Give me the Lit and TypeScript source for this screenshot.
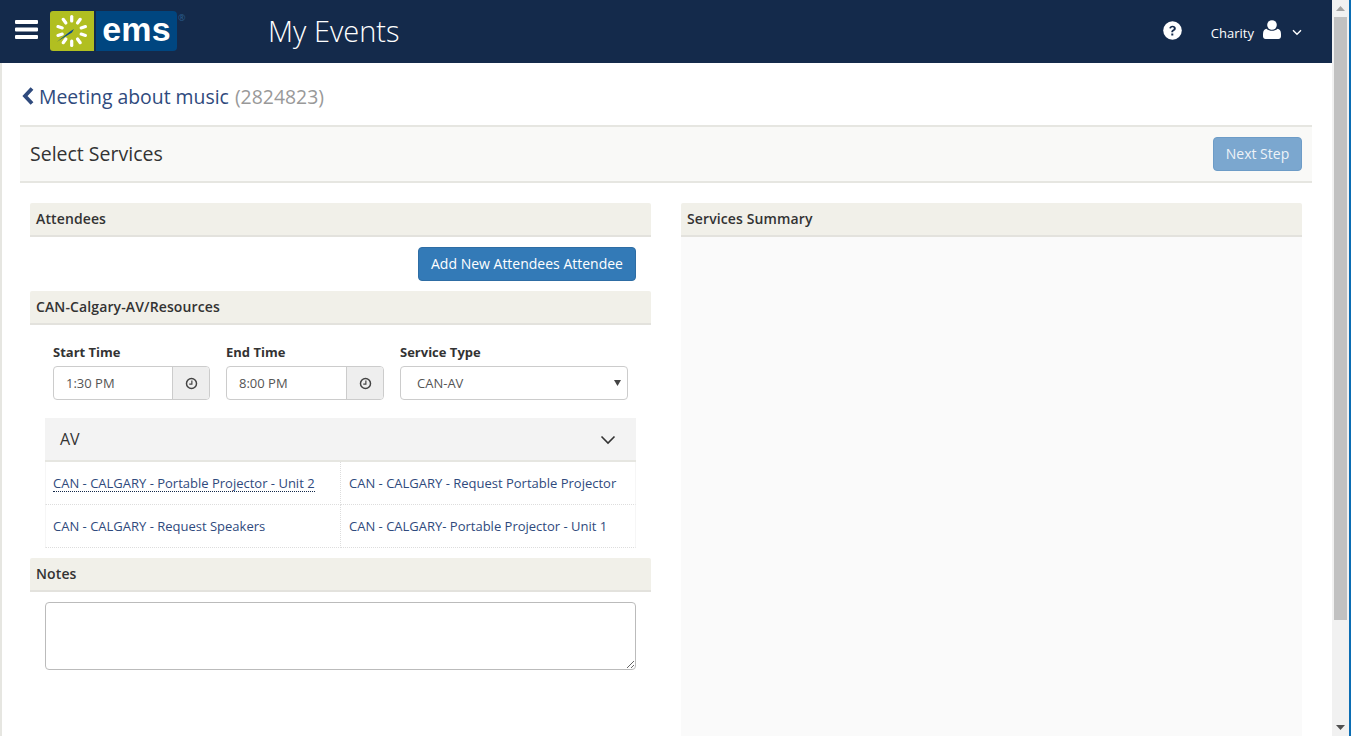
import { LitElement, css, html, svg } from "lit";
import { customElement } from "lit/decorators.js";

const RAYS = [0, 36, 72, 108, 144, 180, 216, 252, 288, 324];

const clock = html`<svg class="clock" viewBox="0 0 14 14" width="13" height="13">
  <circle cx="7" cy="7" r="5.4" fill="none" stroke="#444" stroke-width="1.6"></circle>
  <path d="M7.400 3.800V7.600H4.600" fill="none" stroke="#444" stroke-width="1.3"></path>
</svg>`;

@customElement("app-root")
export class AppRoot extends LitElement {
  static override styles = css`
    :host {
      display: flex;
      height: 736px;
      overflow: hidden;
      font-family: "Open Sans", sans-serif;
      font-size: 13px;
      color: #333;
      background: #fff;
    }

    * {
      box-sizing: border-box;
    }

    .page {
      width: 1332px;
      flex: none;
      display: flex;
      flex-direction: column;
      min-height: 0;
    }

    .scrollbar {
      width: 17px;
      flex: none;
      display: flex;
      flex-direction: column;
      align-items: center;
      background: #f1f1f1;
    }

    .arrow {
      height: 17px;
      flex: none;
      display: flex;
      align-items: center;
      justify-content: center;
    }

    .thumb {
      width: 13px;
      height: 603px;
      flex: none;
      background: #c1c1c1;
    }

    .gap {
      flex: 1;
    }

    .edge {
      width: 2px;
      flex: none;
      background: #0b6db3;
    }

    header {
      height: 63px;
      flex: none;
      display: flex;
      align-items: center;
      background: #142a4b;
      color: #fff;
      padding-left: 15px;
    }

    .burger {
      display: block;
      margin-right: 12px;
      margin-top: -4px;
    }

    .logo {
      display: flex;
      height: 40px;
      margin-top: -1px;
      position: relative;
    }

    .logo-mark {
      width: 44px;
      background: #b1bf21;
      border-radius: 3px 0 0 3px;
      display: flex;
      align-items: center;
      justify-content: center;
    }

    .logo-word {
      width: 81px;
      margin-left: 2px;
      background: #004680;
      border-radius: 0 4px 4px 0;
      font-family: "Liberation Sans", sans-serif;
      font-weight: 700;
      font-size: 34px;
      line-height: 37px;
      text-align: center;
      letter-spacing: 0.2px;
    }

    .reg {
      position: absolute;
      left: 128px;
      top: 1px;
      font-size: 9px;
      line-height: 11px;
      color: #2a5f8e;
    }

    .app-title {
      font-size: 29px;
      font-weight: 300;
      line-height: 38px;
      margin-left: 91px;
      margin-top: -1px;
    }

    .user {
      margin-left: auto;
      display: flex;
      align-items: center;
      margin-top: -3px;
      padding-right: 30px;
    }

    .help {
      display: block;
      margin-right: 29px;
    }

    .user-name {
      font-size: 13px;
      margin-right: 9px;
      margin-top: 5px;
    }

    .user-icon {
      display: block;
      margin-right: 11px;
      margin-top: -1px;
    }

    .user-caret {
      display: block;
      margin-top: 4px;
    }

    .content {
      flex: 1;
      min-height: 0;
      border-left: 2px solid #e6e6e1;
      padding: 0 20px 0 18px;
      display: flex;
      flex-direction: column;
    }

    .crumb {
      height: 62px;
      flex: none;
      display: flex;
      align-items: center;
      padding: 4px 0 0 2px;
      font-size: 19.4px;
      color: #2f4a7d;
    }

    .crumb svg {
      display: block;
      margin-right: 4px;
    }

    .crumb span {
      color: #999;
      margin-left: 6px;
    }

    .step {
      height: 58px;
      flex: none;
      display: flex;
      align-items: center;
      justify-content: space-between;
      padding: 0 10px;
      background: #f9f9f7;
      border-top: 2px solid #e6e6e1;
      border-bottom: 2px solid #e6e6e1;
      font-size: 19.5px;
      color: #333;
    }

    .step-title {
      margin-top: -2px;
    }

    .next {
      height: 34px;
      width: 89px;
      display: flex;
      align-items: center;
      justify-content: center;
      padding-bottom: 2px;
      font-size: 14px;
      font-weight: 500;
      color: #eef3f8;
      background: #7ba7cf;
      border: 1px solid #6d9cc7;
      border-radius: 4px;
    }

    .columns {
      flex: 1;
      min-height: 0;
      display: grid;
      grid-template-columns: 621px 621px;
      gap: 30px;
      padding: 20px 10px 0;
    }

    .col {
      display: flex;
      flex-direction: column;
      min-height: 0;
    }

    .head {
      height: 34px;
      flex: none;
      display: flex;
      align-items: center;
      padding: 0 0 2px 6px;
      font-size: 14px;
      font-weight: 600;
      letter-spacing: 0.12px;
      color: #333;
      background: #f1f0e9;
      border-bottom: 2px solid #e3e2dd;
      border-radius: 2px 2px 0 0;
    }

    .add-row {
      display: flex;
      justify-content: flex-end;
      padding: 10px 15px;
    }

    .add {
      height: 34px;
      width: 218px;
      display: flex;
      align-items: center;
      justify-content: center;
      padding-bottom: 2px;
      font-size: 14px;
      font-weight: 500;
      color: #fff;
      background: #337ab7;
      border: 1px solid #2e6da4;
      border-radius: 4px;
    }

    .fields {
      display: flex;
      gap: 16px;
      padding: 18px 23px 18px;
    }

    .field-label {
      font-size: 13px;
      font-weight: 700;
      line-height: 18px;
      margin-bottom: 5px;
      color: #333;
    }

    .time {
      display: flex;
      height: 34px;
      border: 1px solid #ccc;
      border-radius: 4px;
      overflow: hidden;
      background: #fff;
    }

    .time-value {
      flex: 1;
      padding-left: 12px;
      line-height: 32px;
      font-size: 13px;
      color: #555;
    }

    .time-addon {
      width: 37px;
      flex: none;
      display: flex;
      align-items: center;
      justify-content: center;
      background: #eee;
      border-left: 1px solid #ccc;
    }

    .start {
      width: 157px;
    }

    .end {
      width: 158px;
    }

    .type {
      width: 228px;
    }

    .select-wrap {
      position: relative;
    }

    .select-wrap svg {
      position: absolute;
      right: 7px;
      top: 14px;
      pointer-events: none;
    }

    select {
      display: block;
      width: 100%;
      height: 34px;
      padding: 0 16px;
      font: inherit;
      color: #555;
      background: #fff;
      border: 1px solid #ccc;
      border-radius: 4px;
      appearance: none;
    }

    .group {
      margin: 0 15px;
      flex: none;
    }

    .group-head {
      height: 44px;
      display: flex;
      align-items: center;
      justify-content: space-between;
      padding: 0 20px 0 15px;
      font-size: 16px;
      color: #333;
      background: #f3f3f3;
      border-bottom: 2px solid #e6e6e1;
    }

    .group-head svg {
      display: block;
      margin-top: 2px;
    }

    .items {
      display: grid;
      grid-template-columns: 296px 295px;
      grid-auto-rows: 43px;
    }

    .item {
      display: flex;
      align-items: center;
      padding-left: 8px;
      font-size: 13px;
      color: #2f4a7d;
      border-bottom: 1px dotted #ddd;
    }

    .item:nth-child(odd) {
      padding-left: 7px;
      border-left: 1px solid #f6f6f6;
      border-right: 1px dotted #ddd;
    }

    .item:nth-child(even) {
      border-right: 1px solid #f6f6f6;
    }

    .item.active span {
      border-bottom: 1px dotted #142a4b;
      line-height: 16px;
      margin-top: 1px;
    }

    .notes-head {
      margin-top: 10px;
    }

    .notes {
      margin: 10px 15px 0;
      height: 68px;
      flex: none;
      display: block;
      width: 591px;
      border: 1px solid #bbb;
      border-radius: 4px;
      resize: vertical;
      font: inherit;
    }

    .summary {
      flex: 1;
      background: #fafafa;
    }
  `;

  private ray(angle: number) {
    return svg`<rect x="20.100" y="4" width="3.200" height="7.600" rx="1.500" fill="#fff" transform="rotate(${angle} 21.700 20)"></rect>`;
  }

  override render() {
    return html`
      <div class="page">
        <header>
          <svg class="burger" width="23" height="19" viewBox="0 0 23 19">
            <path d="M1 0h21a1 1 0 0 1 1 1v2a1 1 0 0 1-1 1H1a1 1 0 0 1-1-1V1a1 1 0 0 1 1-1zM1 7.500h21a1 1 0 0 1 1 1v2a1 1 0 0 1-1 1H1a1 1 0 0 1-1-1v-2a1 1 0 0 1 1-1zM1 15h21a1 1 0 0 1 1 1v2a1 1 0 0 1-1 1H1a1 1 0 0 1-1-1v-2a1 1 0 0 1 1-1z" fill="#fff"></path>
          </svg>
          <div class="logo">
            <div class="logo-mark">
              <svg width="44" height="40" viewBox="0 0 44 40">
                ${RAYS.map((a) => this.ray(a))}
                <path d="M7 30.800L20 20.500l4-2.500-2 3.600z" fill="#0d4a8a"></path>
              </svg>
            </div>
            <div class="logo-word">ems</div>
            <div class="reg">®</div>
          </div>
          <div class="app-title">My Events</div>
          <div class="user">
            <svg class="help" width="19" height="19" viewBox="0 0 19 19">
              <circle cx="9.500" cy="9.500" r="9.300" fill="#fff"></circle>
              <path d="M6.300 7.300c.2-1.700 1.500-2.600 3.200-2.600 1.900 0 3.300 1.100 3.300 2.700 0 1.300-.8 1.900-1.600 2.400-.7.400-1 .7-1 1.500H8.300c0-1.400.5-2 1.300-2.500.7-.4 1.200-.8 1.200-1.400 0-.7-.6-1.100-1.300-1.100-.8 0-1.300.4-1.500 1.200z M8.300 12.400h2v2.100h-2z" fill="#142a4b"></path>
            </svg>
            <div class="user-name">Charity</div>
            <svg class="user-icon" width="18" height="19" viewBox="0 0 18 19">
              <circle cx="9" cy="5" r="4.800" fill="#fff"></circle>
              <path d="M3.500 8.800C5 10.200 7 10.800 9 10.800s4-.6 5.500-2c2 .3 3.500 2 3.500 5.200v2.300c0 1.500-1 2.700-2.600 2.700H2.600C1 19 0 17.800 0 16.300V14c0-3.200 1.500-4.900 3.500-5.200z" fill="#fff"></path>
            </svg>
            <svg class="user-caret" width="10" height="7" viewBox="0 0 10 7">
              <path d="M1 1.200l4 4 4-4" fill="none" stroke="#fff" stroke-width="1.400"></path>
            </svg>
          </div>
        </header>

        <div class="content">
          <div class="crumb">
            <svg width="13" height="18" viewBox="0 0 13 18">
              <path d="M10 1.500L3 9l7 7.500" fill="none" stroke="#2f4a7d" stroke-width="3.800"></path>
            </svg>
            Meeting about music<span>(2824823)</span>
          </div>

          <div class="step">
            <div class="step-title">Select Services</div>
            <div class="next">Next Step</div>
          </div>

          <div class="columns">
            <div class="col">
              <div class="head">Attendees</div>
              <div class="add-row"><div class="add">Add New Attendees Attendee</div></div>
              <div class="head">CAN-Calgary-AV/Resources</div>
              <div class="fields">
                <div class="start">
                  <div class="field-label">Start Time</div>
                  <div class="time">
                    <div class="time-value">1:30 PM</div>
                    <div class="time-addon">${clock}</div>
                  </div>
                </div>
                <div class="end">
                  <div class="field-label">End Time</div>
                  <div class="time">
                    <div class="time-value">8:00 PM</div>
                    <div class="time-addon">${clock}</div>
                  </div>
                </div>
                <div class="type">
                  <div class="field-label">Service Type</div>
                  <div class="select-wrap">
                    <select><option>CAN-AV</option></select>
                    <svg width="7" height="6" viewBox="0 0 7 6"><path d="M0 0h7L3.500 6z" fill="#444"></path></svg>
                  </div>
                </div>
              </div>

              <div class="group">
                <div class="group-head">
                  AV
                  <svg width="16" height="10" viewBox="0 0 16 10">
                    <path d="M1.500 1.500L8 8l6.500-6.500" fill="none" stroke="#333" stroke-width="1.600"></path>
                  </svg>
                </div>
                <div class="items">
                  <div class="item active"><span>CAN - CALGARY - Portable Projector - Unit 2</span></div>
                  <div class="item"><span>CAN - CALGARY - Request Portable Projector</span></div>
                  <div class="item"><span>CAN - CALGARY - Request Speakers</span></div>
                  <div class="item"><span>CAN - CALGARY- Portable Projector - Unit 1</span></div>
                </div>
              </div>

              <div class="head notes-head">Notes</div>
              <textarea class="notes"></textarea>
            </div>

            <div class="col">
              <div class="head">Services Summary</div>
              <div class="summary"></div>
            </div>
          </div>
        </div>
      </div>

      <div class="scrollbar">
        <div class="arrow">
          <svg width="9" height="5" viewBox="0 0 9 5"><path d="M4.500 0L9 5H0z" fill="#a3a3a3"></path></svg>
        </div>
        <div class="thumb"></div>
        <div class="gap"></div>
        <div class="arrow">
          <svg width="9" height="5" viewBox="0 0 9 5"><path d="M0 0h9L4.500 5z" fill="#505050"></path></svg>
        </div>
      </div>
      <div class="edge"></div>
    `;
  }
}

declare global {
  interface HTMLElementTagNameMap {
    "app-root": AppRoot;
  }
}
